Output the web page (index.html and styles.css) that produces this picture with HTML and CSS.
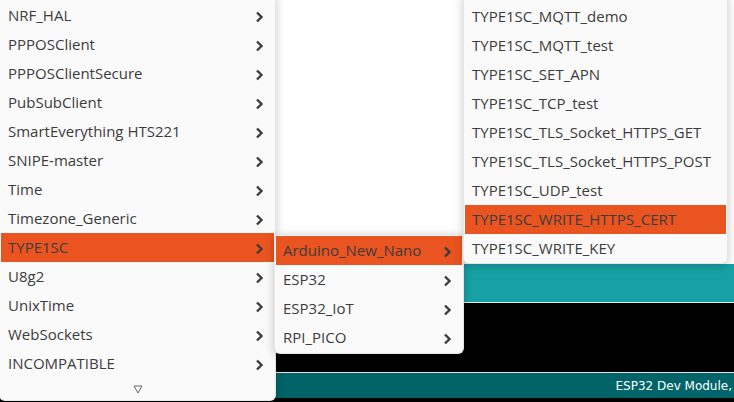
FILE: index.html
```html
<!DOCTYPE html>
<html lang="en">
<head>
    <meta charset="UTF-8">
    <meta name="viewport" content="width=device-width, initial-scale=1.0">
    <title>Arduino IDE - Examples menu</title>
    <link rel="stylesheet" href="styles.css">
</head>
<body>
    <div class="app">
        <div class="editor"></div>
        <div class="console-head"></div>
        <div class="divider"></div>
        <div class="console"></div>
        <div class="divider"></div>
        <div class="status">
            <span>ESP32 Dev Module,</span>
        </div>
        <div class="bottom"></div>
    </div>

    <!-- libraries menu -->
    <div class="menu menu-libs">
        <div class="item">NRF_HAL<svg class="chev" viewBox="0 0 9 16"><polyline points="2,5.5 6.5,10 2,14.5"/></svg></div>
        <div class="item">PPPOSClient<svg class="chev" viewBox="0 0 9 16"><polyline points="2,5.5 6.5,10 2,14.5"/></svg></div>
        <div class="item">PPPOSClientSecure<svg class="chev" viewBox="0 0 9 16"><polyline points="2,5.5 6.5,10 2,14.5"/></svg></div>
        <div class="item">PubSubClient<svg class="chev" viewBox="0 0 9 16"><polyline points="2,5.5 6.5,10 2,14.5"/></svg></div>
        <div class="item">SmartEverything HTS221<svg class="chev" viewBox="0 0 9 16"><polyline points="2,5.5 6.5,10 2,14.5"/></svg></div>
        <div class="item">SNIPE-master<svg class="chev" viewBox="0 0 9 16"><polyline points="2,5.5 6.5,10 2,14.5"/></svg></div>
        <div class="item">Time<svg class="chev" viewBox="0 0 9 16"><polyline points="2,5.5 6.5,10 2,14.5"/></svg></div>
        <div class="item">Timezone_Generic<svg class="chev" viewBox="0 0 9 16"><polyline points="2,5.5 6.5,10 2,14.5"/></svg></div>
        <div class="item active">TYPE1SC<svg class="chev" viewBox="0 0 9 16"><polyline points="2,5.5 6.5,10 2,14.5"/></svg></div>
        <div class="item">U8g2<svg class="chev" viewBox="0 0 9 16"><polyline points="2,5.5 6.5,10 2,14.5"/></svg></div>
        <div class="item">UnixTime<svg class="chev" viewBox="0 0 9 16"><polyline points="2,5.5 6.5,10 2,14.5"/></svg></div>
        <div class="item">WebSockets<svg class="chev" viewBox="0 0 9 16"><polyline points="2,5.5 6.5,10 2,14.5"/></svg></div>
        <div class="item">INCOMPATIBLE<svg class="chev" viewBox="0 0 9 16"><polyline points="2,5.5 6.5,10 2,14.5"/></svg></div>
        <div class="scroll-down">
            <svg viewBox="0 0 10 9"><polygon points="1,1 9,1 5,8"/></svg>
        </div>
    </div>

    <!-- TYPE1SC boards -->
    <div class="menu menu-boards">
        <div class="item active">Arduino_New_Nano<svg class="chev" viewBox="0 0 9 16"><polyline points="2,5.5 6.5,10 2,14.5"/></svg></div>
        <div class="item">ESP32<svg class="chev" viewBox="0 0 9 16"><polyline points="2,5.5 6.5,10 2,14.5"/></svg></div>
        <div class="item">ESP32_IoT<svg class="chev" viewBox="0 0 9 16"><polyline points="2,5.5 6.5,10 2,14.5"/></svg></div>
        <div class="item">RPI_PICO<svg class="chev" viewBox="0 0 9 16"><polyline points="2,5.5 6.5,10 2,14.5"/></svg></div>
    </div>

    <!-- sketches -->
    <div class="menu menu-sketches">
        <div class="item">TYPE1SC_MQTT_demo</div>
        <div class="item">TYPE1SC_MQTT_test</div>
        <div class="item">TYPE1SC_SET_APN</div>
        <div class="item">TYPE1SC_TCP_test</div>
        <div class="item">TYPE1SC_TLS_Socket_HTTPS_GET</div>
        <div class="item">TYPE1SC_TLS_Socket_HTTPS_POST</div>
        <div class="item">TYPE1SC_UDP_test</div>
        <div class="item active">TYPE1SC_WRITE_HTTPS_CERT</div>
        <div class="item">TYPE1SC_WRITE_KEY</div>
    </div>
</body>
</html>
```

FILE: styles.css
```css
* {
    margin: 0;
    padding: 0;
    box-sizing: border-box;
}
body {
    width: 734px;
    height: 402px;
    overflow: hidden;
    position: relative;
    background-color: #000;
    font-family: "Open Sans", "Noto Sans", sans-serif;
}
.app {
    display: flex;
    flex-direction: column;
    height: 402px;
}
.editor {
    height: 264px;
    background-color: #fff;
}
.console-head {
    height: 38px;
    background-color: #17a1a5;
}
.divider {
    height: 1px;
    background-color: #e6e6e6;
}
.console {
    height: 69px;
    background-color: #000;
}
.status {
    height: 25px;
    background-color: #006468;
    color: #fff;
    font-family: "DejaVu Sans", sans-serif;
    font-size: 12px;
    display: flex;
    align-items: center;
    justify-content: flex-end;
    padding-right: 2px;
    white-space: nowrap;
}
.bottom {
    flex: 1;
    background-color: #000;
}
.menu {
    position: absolute;
    background-color: #fafafa;
    border: 1px solid rgba(0,0,0,0.08);
    border-radius: 6px;
    box-shadow: 0 2px 10px rgba(0,0,0,0.22);
    padding: 0 1px;
}
.menu-libs {
    left: -1px;
    top: -6px;
    width: 277px;
    padding-top: 6px;
    z-index: 1;
}
.menu-boards {
    left: 274px;
    top: 234px;
    width: 190px;
    padding-top: 1px;
    padding-bottom: 1px;
    z-index: 2;
}
.menu-sketches {
    left: 463px;
    top: -6px;
    width: 265px;
    padding-top: 7px;
    z-index: 3;
}
.item {
    height: 29px;
    display: flex;
    align-items: center;
    justify-content: space-between;
    padding: 0 10px 2px 7px;
    font-size: 15px;
    color: #3c3c3c;
    white-space: nowrap;
}
.item.active {
    background-color: #e95420;
}
.chev {
    width: 9px;
    height: 16px;
}
.chev polyline {
    fill: none;
    stroke: #3c3c3c;
    stroke-width: 2.4;
}
.scroll-down {
    height: 22px;
    display: flex;
    align-items: center;
    justify-content: center;
}
.scroll-down svg {
    width: 10px;
    height: 9px;
}
.scroll-down polygon {
    fill: none;
    stroke: #666;
    stroke-width: 1;
}
```
